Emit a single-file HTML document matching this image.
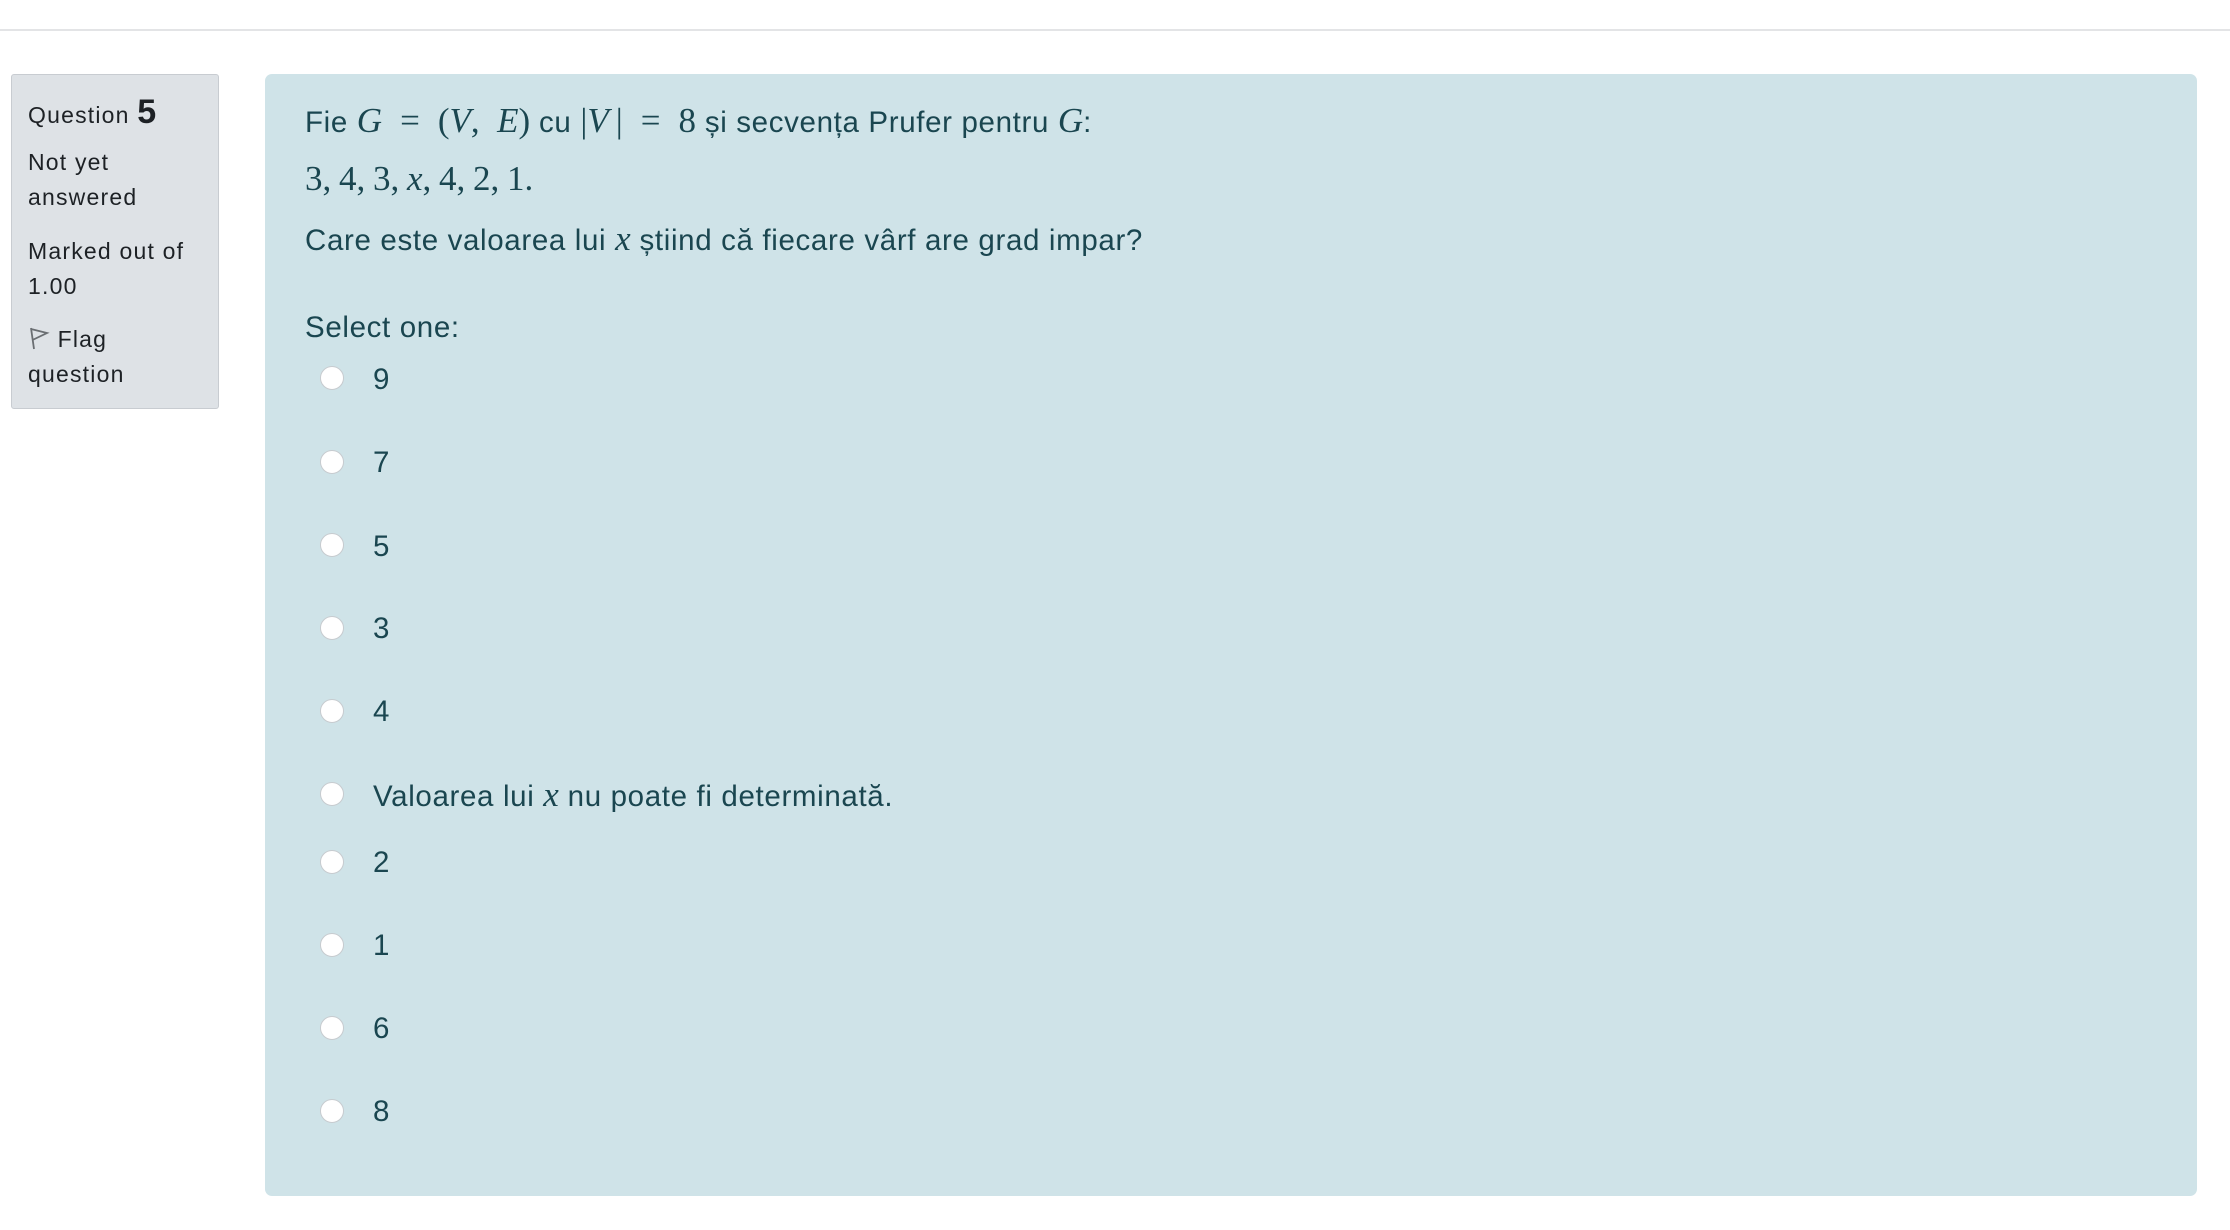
<!DOCTYPE html>
<html><head><meta charset="utf-8"><style>
html,body{margin:0;padding:0;background:#fff;width:2230px;height:1230px;overflow:hidden;position:relative;font-family:"Liberation Sans",sans-serif}
.top{position:absolute;left:0;top:29px;width:2230px;height:2px;background:#e3e4e6}
.info{position:absolute;left:11px;top:74px;width:206px;height:333px;background:#dee2e6;border:1px solid #c8ccd1;border-radius:3px;box-sizing:content-box;color:#1d2125;font-size:23px;letter-spacing:1.2px}
.info div{position:absolute;left:16px;line-height:36px;white-space:nowrap}
.panel{position:absolute;left:265px;top:74px;width:1932px;height:1122px;background:#cfe3e8;border-radius:7px;color:#1a4650;font-size:29.5px;letter-spacing:0.65px}
.panel .t{position:absolute;left:40px;white-space:nowrap;line-height:40px}
.m{font-family:"Liberation Serif",serif;font-size:35px;letter-spacing:0}
.i{font-style:italic}
.eq{margin:0 18px}
.r{position:absolute;left:55px;width:24px;height:24px;border-radius:50%;background:#fff;border:1px solid #c7cbcf;box-sizing:border-box}
.o{position:absolute;left:108px;line-height:40px;white-space:nowrap}
</style></head><body>
<div class="top"></div>
<div class="info">
<div style="top:19px">Question <b style="font-size:34px;letter-spacing:0">5</b></div>
<div style="top:69px">Not yet</div>
<div style="top:104px">answered</div>
<div style="top:158px">Marked out of</div>
<div style="top:193px">1.00</div>
<div style="top:246px"><svg width="22" height="24" viewBox="0 0 22 24" style="vertical-align:-3px"><path d="M3 2 L6 23 M3 3 L19 7 L4.5 14" fill="none" stroke="#6a6e72" stroke-width="1.8"/></svg> Flag</div>
<div style="top:281px">question</div>
</div>
<div class="panel">
<div class="t" style="top:27px">Fie <span class="m i">G</span><span class="m eq">=</span><span class="m">(<i>V</i>,&nbsp; <i>E</i>)</span> cu <span class="m">|<i>V</i>&thinsp;|</span><span class="m eq">=</span><span class="m">8</span> și secvența Prufer pentru <span class="m i">G</span>:</div>
<div class="t" style="top:85px"><span class="m" style="word-spacing:-1px">3, 4, 3, <i>x</i>, 4, 2, 1.</span></div>
<div class="t" style="top:145px">Care este valoarea lui <span class="m i">x</span> știind că fiecare vârf are grad impar?</div>
<div class="t" style="top:234px">Select one:</div>

<div class="r" style="top:292px"></div><div class="o" style="top:286px">9</div>
<div class="r" style="top:376px"></div><div class="o" style="top:369px">7</div>
<div class="r" style="top:459px"></div><div class="o" style="top:453px">5</div>
<div class="r" style="top:542px"></div><div class="o" style="top:535px">3</div>
<div class="r" style="top:625px"></div><div class="o" style="top:618px">4</div>
<div class="r" style="top:708px"></div><div class="o" style="top:701px">Valoarea lui <span class="m i">x</span> nu poate fi determinată.</div>
<div class="r" style="top:776px"></div><div class="o" style="top:769px">2</div>
<div class="r" style="top:859px"></div><div class="o" style="top:852px">1</div>
<div class="r" style="top:942px"></div><div class="o" style="top:935px">6</div>
<div class="r" style="top:1025px"></div><div class="o" style="top:1018px">8</div>
</div>
</body></html>
